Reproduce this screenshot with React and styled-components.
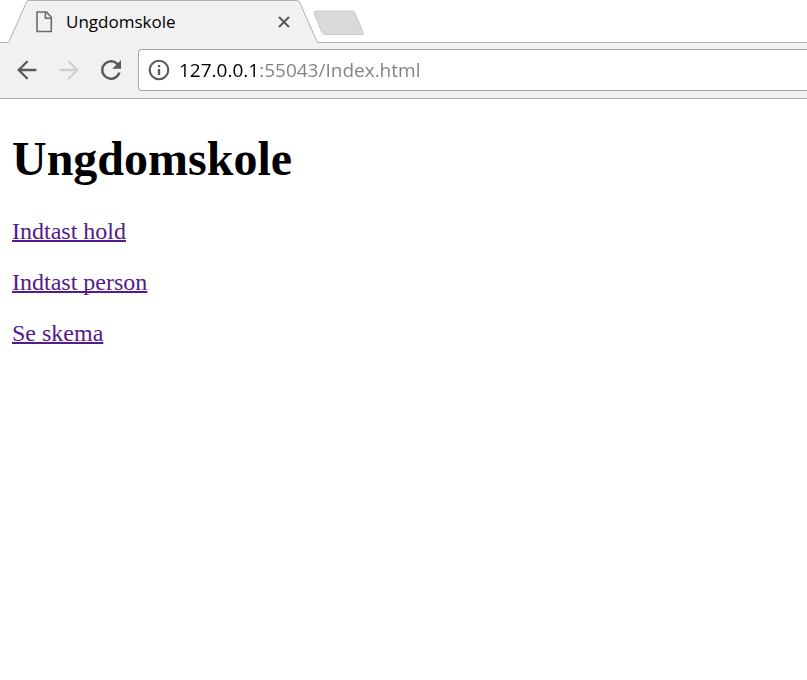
import React from "react";
import styled, { createGlobalStyle } from "styled-components";

const GlobalStyle = createGlobalStyle`
  *, *::before, *::after { box-sizing: border-box; }
  body { margin: 0; background: #fff; }
`;

const Browser = styled.div`
  display: flex;
  flex-direction: column;
  min-height: 100vh;
  overflow: hidden;
  font-family: "Open Sans", "Noto Sans", sans-serif;
`;

const TabStrip = styled.header`
  display: flex;
  align-items: flex-end;
  height: 43px;
  background: linear-gradient(#b1b1b1, #b1b1b1) bottom / 100% 1px no-repeat #fff;
  padding-left: 8px;
`;

const Tab = styled.div`
  display: flex;
  height: 43px;
`;

const TabEdge = styled.svg`
  flex: none;
  display: block;
`;

const TabBody = styled.div`
  display: flex;
  align-items: center;
  width: 268px;
  padding: 0 5px 0 7px;
  border-top: 1px solid #b1b1b1;
  background: #f1f1f1;
`;

const TabTitle = styled.span`
  flex: 1;
  margin-left: 12px;
  font-size: 17px;
  line-height: 24px;
  color: #000;
`;

const IconButton = styled.button`
  display: flex;
  align-items: center;
  justify-content: center;
  flex: none;
  width: ${(p) => p.$size}px;
  height: ${(p) => p.$size}px;
  padding: 0;
  border: 0;
  background: none;
  color: ${(p) => (p.disabled ? "#d0d0d0" : "#5a5a5a")};
`;

const NewTab = styled.button`
  align-self: flex-start;
  margin: 10px 0 0 -5px;
  padding: 0;
  border: 0;
  background: none;
  line-height: 0;
`;

const Toolbar = styled.nav`
  display: flex;
  align-items: center;
  height: 56px;
  padding: 0 0 1px 12px;
  background: #f1f1f1;
  border-bottom: 1px solid #b1b1b1;
`;

const NavButtons = styled.div`
  display: flex;
  gap: 12px;
  margin-right: 12px;
`;

const AddressBar = styled.div`
  display: flex;
  align-items: center;
  flex: 1;
  height: 42px;
  padding-left: 5px;
  background: #fff;
  border: 1px solid #a9a9a9;
  border-right: 0;
  border-radius: 4px 0 0 4px;
`;

/* The host is black and the rest of the address is grey. */
const Address = styled.input`
  flex: 1;
  min-width: 0;
  height: 32px;
  margin-left: 5px;
  padding: 0;
  border: 0;
  outline: 0;
  font: 19px/32px "Open Sans", "Noto Sans", sans-serif;
  color: #808080;
  background: linear-gradient(to right, #000 81px, #808080 81px);
  background-clip: text;
  -webkit-background-clip: text;
  -webkit-text-fill-color: transparent;
`;

const Page = styled.main`
  padding: 32px 12px;
  font-family: "Liberation Serif", "Times New Roman", serif;
`;

const Title = styled.h1`
  margin: 0 0 32px;
  font-size: 48px;
  line-height: 55px;
  font-weight: bold;
  color: #000;
`;

const LinkLine = styled.p`
  margin: 0 0 24px;
  font-size: 24px;
  line-height: 27px;
`;

const PageLink = styled.a`
  color: #551a8b;
  text-decoration: underline;
  text-decoration-thickness: 2px;
  text-decoration-skip-ink: none;
`;

const links = [
  { label: "Indtast hold", href: "#hold" },
  { label: "Indtast person", href: "#person" },
  { label: "Se skema", href: "#skema" },
];

function FileIcon() {
  return (
    <svg width="18" height="22" viewBox="0 0 18 22" fill="none" stroke="#6b6b6b" strokeWidth="1.6" aria-hidden="true">
      <path d="M1 1H10.5L15.3 6.2V20.5H1Z" />
      <path d="M9.4 1V7.2H15.3" />
    </svg>
  );
}

function CloseIcon() {
  return (
    <svg width="12" height="12" viewBox="0 0 12 12" stroke="currentColor" strokeWidth="2" aria-hidden="true">
      <path d="M1 1L11 11M11 1L1 11" />
    </svg>
  );
}

function ArrowIcon({ forward }) {
  return (
    <svg width="20" height="20" viewBox="0 0 20 20" fill="none" stroke="currentColor" strokeWidth="2.3" strokeLinecap="round" aria-hidden="true">
      <path d={forward ? "M1.5 10H18M10 1.7L18.3 10L10 18.3" : "M18.5 10H2M10 1.7L1.7 10L10 18.3"} />
    </svg>
  );
}

function ReloadIcon() {
  return (
    <svg width="30" height="30" viewBox="0 0 24 24" fill="currentColor" aria-hidden="true">
      <path d="M17.65 6.35A7.96 7.96 0 0 0 12 4a8 8 0 1 0 7.73 10h-2.08A6 6 0 1 1 12 6c1.66 0 3.14.69 4.22 1.78L13 11h7V4z" />
    </svg>
  );
}

function InfoIcon() {
  return (
    <svg width="22" height="22" viewBox="0 0 22 22" fill="none" aria-hidden="true">
      <circle cx="11" cy="11" r="9.3" stroke="currentColor" strokeWidth="2.1" />
      <path d="M11 6V8.2M11 10V16" stroke="currentColor" strokeWidth="2.3" />
    </svg>
  );
}

export default function App() {
  return (
    <Browser>
      <GlobalStyle />
      <TabStrip>
        <Tab>
          <TabEdge width="21" height="43" viewBox="0 0 21 43" aria-hidden="true">
            <path d="M0 43V42.5Q1 42 1.5 40.5L18.5 2Q19 .5 21 .5V43Z" fill="#f1f1f1" />
            <path d="M0 42.5Q1 42 1.5 40.5L18.5 2Q19 .5 21 .5" fill="none" stroke="#b1b1b1" />
          </TabEdge>
          <TabBody>
            <FileIcon />
            <TabTitle>Ungdomskole</TabTitle>
            <IconButton $size={16} aria-label="Luk fane">
              <CloseIcon />
            </IconButton>
          </TabBody>
          <TabEdge width="21" height="43" viewBox="0 0 21 43" aria-hidden="true">
            <path d="M21 43V42.5Q20 42 19.5 40.5L2.5 2Q2 .5 0 .5V43Z" fill="#f1f1f1" />
            <path d="M21 42.5Q20 42 19.5 40.5L2.5 2Q2 .5 0 .5" fill="none" stroke="#b1b1b1" />
          </TabEdge>
        </Tab>
        <NewTab aria-label="Ny fane">
          <svg width="52" height="26" viewBox="0 0 52 26" aria-hidden="true">
            <path d="M3 1H39Q41 1 42 3L50 22Q51 24.5 49 24.5H12Q10 24.5 9 22.5L1 3.5Q.5 1 3 1Z" fill="#d9d9d9" stroke="#cacaca" />
          </svg>
        </NewTab>
      </TabStrip>
      <Toolbar aria-label="Navigation">
        <NavButtons>
          <IconButton $size={30} aria-label="Tilbage">
            <ArrowIcon />
          </IconButton>
          <IconButton $size={30} aria-label="Frem" disabled>
            <ArrowIcon forward />
          </IconButton>
          <IconButton $size={30} aria-label="Genindlæs">
            <ReloadIcon />
          </IconButton>
        </NavButtons>
        <AddressBar>
          <IconButton $size={30} aria-label="Oplysninger om webstedet">
            <InfoIcon />
          </IconButton>
          <Address aria-label="Adresse" defaultValue="127.0.0.1:55043/Index.html" spellCheck={false} />
        </AddressBar>
      </Toolbar>
      <Page>
        <Title>Ungdomskole</Title>
        {links.map((link) => (
          <LinkLine key={link.label}>
            <PageLink href={link.href}>{link.label}</PageLink>
          </LinkLine>
        ))}
      </Page>
    </Browser>
  );
}
